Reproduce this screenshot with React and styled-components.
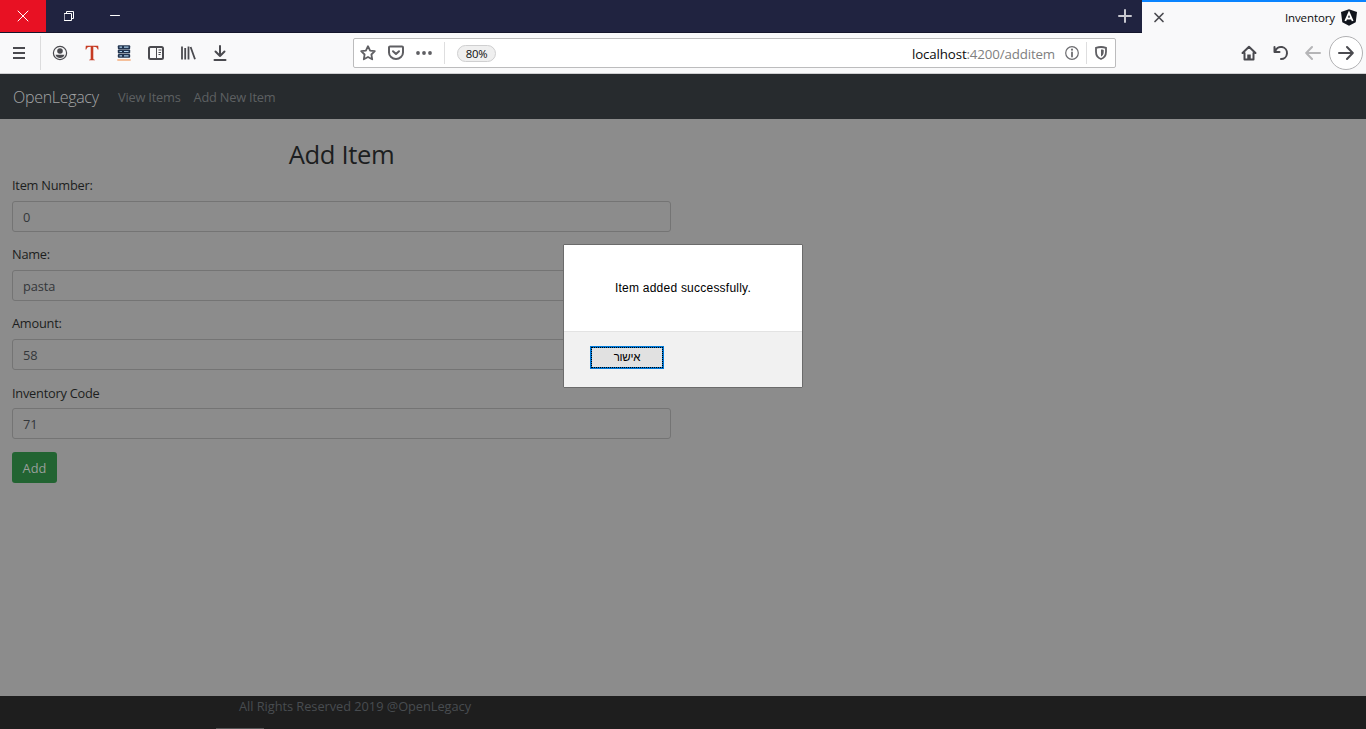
import React from "react";
import styled, { createGlobalStyle } from "styled-components";

const Global = createGlobalStyle`
  *, *::before, *::after { box-sizing: border-box; }
  body { margin: 0; overflow: hidden; font-family: "Open Sans", "Noto Sans", sans-serif; }
`;

const Screen = styled.div`
  width: 1366px;
  height: 729px;
  display: flex;
  flex-direction: column;
  position: relative;
  background: #8c8c8c;
`;

const TitleBar = styled.header`
  height: 33px;
  flex: none;
  display: flex;
  background: #202340;
`;

const WindowButton = styled.div`
  width: 46px;
  height: 32px;
  display: flex;
  align-items: center;
  justify-content: center;
  background: ${(p) => (p.$danger ? "#e81123" : "transparent")};
`;

const TitleSpace = styled.div`
  flex: 1;
  border-bottom: 1px solid #14162c;
  margin-left: -138px;
  padding-right: 9px;
  display: flex;
  align-items: center;
  justify-content: flex-end;
`;

const Tab = styled.div`
  width: 224px;
  border-top: 2px solid #0a84ff;
  background: #f9f9fa;
  display: flex;
  align-items: center;
  justify-content: space-between;
  padding: 0 8px 0 11px;
`;

const TabTitle = styled.div`
  display: flex;
  align-items: center;
  gap: 5px;
  font-size: 11.5px;
  letter-spacing: -0.1px;
  color: #0c0c0d;
`;

const Toolbar = styled.div`
  height: 41px;
  flex: none;
  display: flex;
  align-items: center;
  background: #f9f9fa;
  border-bottom: 1px solid #cfcfd1;
`;

const ToolGroup = styled.div`
  width: ${(p) => p.$width}px;
  display: flex;
  align-items: center;
  justify-content: ${(p) => (p.$end ? "flex-end" : "flex-start")};
`;

const ToolButton = styled.div`
  width: 32px;
  height: 34px;
  display: flex;
  align-items: center;
  justify-content: center;
`;

const MenuButton = styled(ToolButton)`
  width: 41px;
  padding-right: 3px;
  margin-right: 3px;
  border-right: 1px solid #dcdcdd;
`;

const ForwardButton = styled.div`
  width: 34px;
  height: 34px;
  border: 1px solid #b1b1b3;
  border-radius: 50%;
  background: #fff;
  display: flex;
  align-items: center;
  justify-content: center;
`;

const AddressBar = styled.div`
  width: 763px;
  height: 30px;
  border: 1px solid #bcbcbd;
  border-radius: 2px;
  background: #fff;
  display: flex;
  align-items: center;
  padding: 0 6px;
`;

const AddressIcon = styled.div`
  width: ${(p) => p.$width || 28}px;
  display: flex;
  justify-content: ${(p) => (p.$end ? "flex-end" : "flex-start")};
`;

const Divider = styled.div`
  width: 1px;
  height: 22px;
  background: #dededf;
`;

const Zoom = styled.div`
  width: 39px;
  height: 17px;
  margin-left: 12px;
  border: 1px solid #cfcfd0;
  border-radius: 9px;
  background: #efefef;
  display: flex;
  align-items: center;
  justify-content: center;
  font-size: 11.3px;
  letter-spacing: -0.2px;
  color: #0c0c0d;
`;

const Url = styled.div`
  flex: 1;
  text-align: right;
  padding: 2px 10px 0 0;
  font-size: 13.3px;
  letter-spacing: -0.14px;
  color: #808080;
  b { font-weight: 400; color: #0c0c0d; }
`;

const Navbar = styled.nav`
  height: 45px;
  flex: none;
  display: flex;
  align-items: center;
  padding-left: 13px;
  background: #272b2e;
`;

const Brand = styled.div`
  width: 105px;
  padding-top: 1px;
  font-size: 16px;
  font-weight: 300;
  letter-spacing: -0.3px;
  color: #a4a5a6;
`;

const NavLink = styled.div`
  margin-right: 13px;
  font-size: 12.8px;
  letter-spacing: -0.2px;
  color: #5d6062;
`;

const Content = styled.main`
  flex: 1;
  padding: 20px 12px 0;
`;

const Form = styled.form`
  width: 659px;
  color: #1c1e20;
`;

const Heading = styled.h1`
  margin: 0 0 6px;
  height: 31px;
  font-size: 25.6px;
  line-height: 32px;
  font-weight: 400;
  letter-spacing: -0.35px;
  text-align: center;
`;

const Field = styled.div`
  height: 69.2px;
`;

const Label = styled.label`
  display: block;
  height: 24.8px;
  font-size: 12.8px;
  line-height: 19.4px;
  letter-spacing: -0.24px;
`;

const Input = styled.div`
  height: 31px;
  border: 1px solid #747474;
  border-radius: 3px;
  padding: 1px 10px 0;
  font-size: 12.8px;
  line-height: 29px;
  letter-spacing: -0.1px;
  color: #34373a;
`;

const AddButton = styled.div`
  width: 45px;
  height: 31px;
  margin-top: -1px;
  border-radius: 3px;
  background: #226432;
  color: #999f9b;
  font-size: 12.8px;
  line-height: 32px;
  text-align: center;
`;

const Footer = styled.footer`
  height: 33px;
  flex: none;
  background: #1e1e1e;
  padding-left: 239px;
  color: #484c50;
  font-size: 12.8px;
  line-height: 20px;
  letter-spacing: -0.04px;
  display: flex;
  flex-direction: column;
  justify-content: space-between;
`;

const FooterEdge = styled.div`
  height: 1px;
  width: 48px;
  margin-left: -23px;
  background: #555;
`;

const Dialog = styled.div`
  position: absolute;
  left: 563px;
  top: 244px;
  width: 240px;
  height: 144px;
  border: 1px solid #6b6b6b;
  border-radius: 1px;
  background: #f1f1f1;
  color: #000;
  font-family: "Liberation Sans", sans-serif;
`;

const Message = styled.div`
  height: 87px;
  background: #fff;
  border-bottom: 1px solid #e3e3e3;
  font-size: 12px;
  line-height: 86px;
  letter-spacing: 0.23px;
  text-align: center;
`;

const Confirm = styled.div`
  width: 74px;
  height: 23px;
  margin: 14px 0 0 26px;
  border: 1px solid #0078d7;
  outline: 1px dotted #000;
  outline-offset: -2px;
  box-shadow: inset 0 0 0 1px #0078d7;
  background: #e1e1e1;
  font-size: 11.5px;
  line-height: 21px;
  letter-spacing: -0.2px;
  text-align: center;
`;

const Icon = ({ size = 16, color = "#4a4a4f", w = 2, children, h }) => (
  <svg width={size} height={h || size} viewBox={`0 0 ${size} ${h || size}`} fill="none"
    stroke={color} strokeWidth={w} strokeLinecap="round" strokeLinejoin="round">{children}</svg>
);

const fields = [
  ["Item Number:", "0"],
  ["Name:", "pasta"],
  ["Amount:", "58"],
  ["Inventory Code", "71"],
];

export default function App() {
  return (
    <Screen>
      <Global />
      <TitleBar>
        <WindowButton $danger>
          <Icon size={12} color="#fff" w={1}><path d="M1 1l10 10M11 1l-10 10" /></Icon>
        </WindowButton>
        <WindowButton>
          <Icon size={10} color="#fff" w={1}><path d="M.5 2.5h7v7h-7zM2.5 2.500v-2h7v7h-2" /></Icon>
        </WindowButton>
        <WindowButton>
          <Icon size={10} h={2} color="#fff" w={1}><path d="M.5 .5h9" /></Icon>
        </WindowButton>
        <TitleSpace>
          <Icon size={16} color="#c8c8d0" w={2}><path d="M8 2v12M2 8h12" /></Icon>
        </TitleSpace>
        <Tab>
          <Icon size={12} w={1.7}><path d="M2 1.500l8 8M10 1.500l-8 8" /></Icon>
          <TabTitle>
            Inventory
            <svg width="18" height="17" viewBox="0 0 18 17">
              <path d="M9 .3l8 2.800-1.300 10.200L9 16.800l-6.700-3.500L1 3.100z" fill="#10141c" />
              <path d="M5.300 12L9 3.800l3.700 8.200M6.800 9.500h4.400" fill="none" stroke="#fff" strokeWidth="1.800" />
            </svg>
          </TabTitle>
        </Tab>
      </TitleBar>
      <Toolbar>
        <ToolGroup $width={353}>
          <MenuButton>
            <Icon size={14}><path d="M1 2h12M1 7h12M1 12h12" strokeLinecap="butt" /></Icon>
          </MenuButton>
          <ToolButton>
            <Icon size={16} w={1.2}>
              <circle cx="8" cy="8" r="6.600" />
              <circle cx="8" cy="6" r="2.800" fill="#4a4a4f" stroke="none" />
              <path d="M3.500 9.800h9C11.800 12 10 13 8 13S4.200 12 3.500 9.800z" fill="#4a4a4f" stroke="none" />
            </Icon>
          </ToolButton>
          <ToolButton>
            <svg width="14" height="16" viewBox="0 0 14 16">
              <path d="M.8 .8h12.400l.3 3.800h-.8C12 2.500 11.200 1.800 8.300 1.800v11.700c0 .9.6 1.100 1.700 1.300v.5H4v-.5c1.100-.2 1.700-.4 1.700-1.300V1.800C2.800 1.800 2 2.500 1.300 4.600H.5z" fill="#c63a22" />
            </svg>
          </ToolButton>
          <ToolButton>
            <svg width="14" height="16" viewBox="0 0 14 16">
              {[0, 4.3, 8.6].map((y) => (
                <g key={y}>
                  <rect x=".8" y={y + 0.3} width="12.400" height="3.900" rx="1" fill="#22344f" />
                  <path d={`M2.500 ${y + 2.2}h2.500M7 ${y + 2.2}h4.500`} stroke="#a9cbe8" strokeWidth="1.200" />
                </g>
              ))}
              <path d="M.3 15h13.400" stroke="#f4b183" strokeWidth="1.600" />
            </svg>
          </ToolButton>
          <ToolButton>
            <Icon size={16} h={14}>
              <rect x="1" y="1" width="14" height="12" rx="1.500" />
              <path d="M8.500 1v12M10.500 4h3M10.500 6.500h2.500M10.500 8.500h2" strokeWidth="1" strokeLinecap="butt" />
            </Icon>
          </ToolButton>
          <ToolButton>
            <Icon size={16} h={14}>
              <path d="M2 .5v13M5.200 2v11.500M8.500 .5v13M10.600 1l4.400 12.300" strokeWidth="1.800" strokeLinecap="butt" />
            </Icon>
          </ToolButton>
          <ToolButton>
            <Icon size={14} h={16}><path d="M7 1v10M2.500 6.500L7 11l4.500-4.500M1.500 15h11" /></Icon>
          </ToolButton>
        </ToolGroup>
        <AddressBar>
          <AddressIcon>
            <Icon size={16} w={1.8} color="#5f5f63"><path d="M8 1.200l2.100 4.400 4.700.6-3.400 3.300.8 4.800L8 12l-4.200 2.300.8-4.800L1.200 6.200l4.700-.6z" /></Icon>
          </AddressIcon>
          <AddressIcon>
            <Icon size={16} color="#5f5f63"><path d="M2 1.500h12a1 1 0 0 1 1 1V7.500a7 6.500 0 0 1-14 0V2.500a1 1 0 0 1 1-1z" /><path d="M5 6.200L8 9l3-2.800" /></Icon>
          </AddressIcon>
          <AddressIcon>
            <Icon size={16} color="#5f5f63"><g fill="#5f5f63" stroke="none"><circle cx="2" cy="8" r="1.900" /><circle cx="8" cy="8" r="1.900" /><circle cx="14" cy="8" r="1.900" /></g></Icon>
          </AddressIcon>
          <Divider />
          <Zoom>80%</Zoom>
          <Url><b>localhost</b>:4200/additem</Url>
          <AddressIcon $width={21}>
            <Icon size={14} w={1.2} color="#6c6c70"><circle cx="7" cy="7" r="6.300" /><path d="M7 6.500v4" strokeWidth="1.800" /><circle cx="7" cy="3.700" r="1.100" fill="#6c6c70" stroke="none" /></Icon>
          </AddressIcon>
          <Divider />
          <AddressIcon $width={22} $end>
            <svg width="16" height="14" viewBox="0 0 16 14">
              <path d="M8 1c2 0 3.500.3 5 .8v4C13 9.500 11 12 8 13 5 12 3 9.500 3 5.800v-4C4.500 1.300 6 1 8 1z" fill="none" stroke="#5f5f63" strokeWidth="1.800" />
              <path d="M8 3.500c1 0 1.800.1 2.700.4v2c0 2.200-.9 3.700-2.700 4.700z" fill="#5f5f63" />
            </svg>
          </AddressIcon>
        </AddressBar>
        <ToolGroup $width={247} $end>
          <ToolButton>
            <Icon size={16}>
              <path d="M1.500 8L8 1.800 14.500 8M3.500 8v6.500h9V8" />
              <path d="M8 14.500V9.500" strokeWidth="3.500" strokeLinecap="butt" />
            </Icon>
          </ToolButton>
          <ToolButton>
            <Icon size={16}><path d="M1.500 2v5h5M2.200 6.500A6 6 0 1 1 8 14" /></Icon>
          </ToolButton>
          <ToolButton>
            <Icon size={16} color="#b5b5b7"><path d="M15 8H1.500M7 2L1.200 8 7 14" /></Icon>
          </ToolButton>
          <ForwardButton>
            <Icon size={16}><path d="M1 8h13.500M9 2l5.800 6L9 14" /></Icon>
          </ForwardButton>
        </ToolGroup>
      </Toolbar>
      <Navbar>
        <Brand>OpenLegacy</Brand>
        <NavLink>View Items</NavLink>
        <NavLink>Add New Item</NavLink>
      </Navbar>
      <Content>
        <Form>
          <Heading>Add Item</Heading>
          {fields.map(([label, value]) => (
            <Field key={label}>
              <Label>{label}</Label>
              <Input>{value}</Input>
            </Field>
          ))}
          <AddButton>Add</AddButton>
        </Form>
      </Content>
      <Footer>
        <div>All Rights Reserved 2019 @OpenLegacy</div>
        <FooterEdge />
      </Footer>
      <Dialog>
        <Message>Item added successfully.</Message>
        <Confirm dir="rtl">אישור</Confirm>
      </Dialog>
    </Screen>
  );
}
